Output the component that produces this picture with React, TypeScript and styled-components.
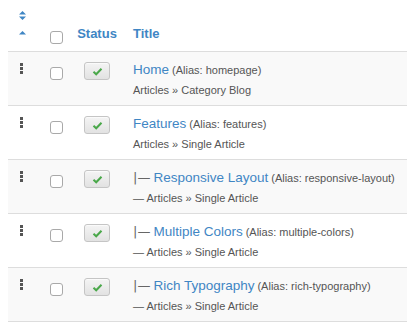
import styled, { createGlobalStyle } from 'styled-components';

const GlobalStyle = createGlobalStyle`
	body {
		margin: 0;
		background: #fff;
		font-family: "Liberation Sans", Arial, sans-serif;
		color: #555;
	}
`;

const items = [
	{ title: 'Home', alias: 'homepage', type: 'Category Blog', level: 0 },
	{ title: 'Features', alias: 'features', type: 'Single Article', level: 0 },
	{ title: 'Responsive Layout', alias: 'responsive-layout', type: 'Single Article', level: 1 },
	{ title: 'Multiple Colors', alias: 'multiple-colors', type: 'Single Article', level: 1 },
	{ title: 'Rich Typography', alias: 'rich-typography', type: 'Single Article', level: 1 },
];

const Page = styled.div`
	padding-left: 8px;
	width: 399px;
`;

const Row = styled.div<{ $striped?: boolean; $header?: boolean }>`
	display: grid;
	grid-template-columns: 32px 32px 50px 1fr;
	height: ${(p) => (p.$header ? '51px' : '53px')};
	border-bottom: 1px solid #ddd;
	background: ${(p) => (p.$striped ? '#f9f9f9' : '#fff')};
`;

const Cell = styled.div<{ $pad?: number; $top?: number; $center?: boolean }>`
	padding-left: ${(p) => p.$pad ?? 0}px;
	padding-top: ${(p) => p.$top ?? 0}px;
	display: flex;
	flex-direction: column;
	align-items: ${(p) => (p.$center ? 'center' : 'flex-start')};
`;

const HeadLabel = styled.span`
	font-size: 13px;
	font-weight: bold;
	color: #3f86c4;
	line-height: 15px;
`;

const SortIcons = styled.div`
	display: flex;
	flex-direction: column;
	gap: 11px;
`;

const Grip = styled.div`
	display: flex;
	flex-direction: column;
	gap: 1px;
	span {
		width: 3px;
		height: 3px;
		background: #555;
	}
`;

const Check = styled.span`
	display: block;
	width: 11px;
	height: 11px;
	border: 1px solid #a9a9a9;
	border-radius: 3px;
	background: #fff;
`;

const StatusButton = styled.span`
	display: flex;
	align-items: center;
	justify-content: center;
	width: 24px;
	height: 16px;
	border: 1px solid #c5c5c5;
	border-radius: 3px;
	background: linear-gradient(#f4f4f4, #e2e2e2);
	box-shadow: inset 0 1px 0 rgba(255, 255, 255, 0.6);
`;

const TitleLine = styled.div`
	white-space: nowrap;
	line-height: 18px;
`;

const Prefix = styled.span`
	font-family: "DejaVu Sans", sans-serif;
	font-size: 13px;
	color: #666;
	margin-right: 3px;
`;

const TitleLink = styled.a`
	font-size: 13.5px;
	color: #3f86c4;
	text-decoration: none;
`;

const Alias = styled.span`
	font-size: 11px;
	color: #555;
	margin-left: 3px;
`;

const Meta = styled.div`
	font-size: 11px;
	color: #555;
	line-height: 16px;
	margin-top: 3px;
	white-space: nowrap;
`;

const App = () => (
	<Page>
		<GlobalStyle />
		<Row $header>
			<Cell $pad={11} $top={11}>
				<SortIcons>
					<svg width="7" height="9" viewBox="0 0 7 9">
						<path d="M3.5 0 L7 3.5 H0 Z M0 5.5 H7 L3.5 9 Z" fill="#3f86c4" />
					</svg>
					<svg width="7" height="4" viewBox="0 0 7 4">
						<path d="M3.5 0 L7 3.5 H0 Z" fill="#3f86c4" />
					</svg>
				</SortIcons>
			</Cell>
			<Cell $pad={10} $top={31}>
				<Check />
			</Cell>
			<Cell $center $top={26}>
				<HeadLabel>Status</HeadLabel>
			</Cell>
			<Cell $pad={11} $top={26}>
				<HeadLabel>Title</HeadLabel>
			</Cell>
		</Row>
		{items.map((item, i) => (
			<Row key={item.alias} $striped={i % 2 === 0}>
				<Cell $pad={12} $top={11}>
					<Grip>
						<span />
						<span />
						<span />
					</Grip>
				</Cell>
				<Cell $pad={10} $top={15}>
					<Check />
				</Cell>
				<Cell $center $top={10}>
					<StatusButton>
						<svg width="11" height="9" viewBox="0 0 11 9">
							<path d="M1.5 4.8 L4.2 7.3 L9.5 1.8" fill="none" stroke="#4aa84a" strokeWidth="2" />
						</svg>
					</StatusButton>
				</Cell>
				<Cell $pad={11} $top={8}>
					<TitleLine>
						{item.level > 0 && <Prefix>|—</Prefix>}
						<TitleLink href="#">{item.title}</TitleLink>
						<Alias>(Alias: {item.alias})</Alias>
					</TitleLine>
					<Meta>
						{item.level > 0 && '— '}Articles » {item.type}
					</Meta>
				</Cell>
			</Row>
		))}
	</Page>
);

export default App;
